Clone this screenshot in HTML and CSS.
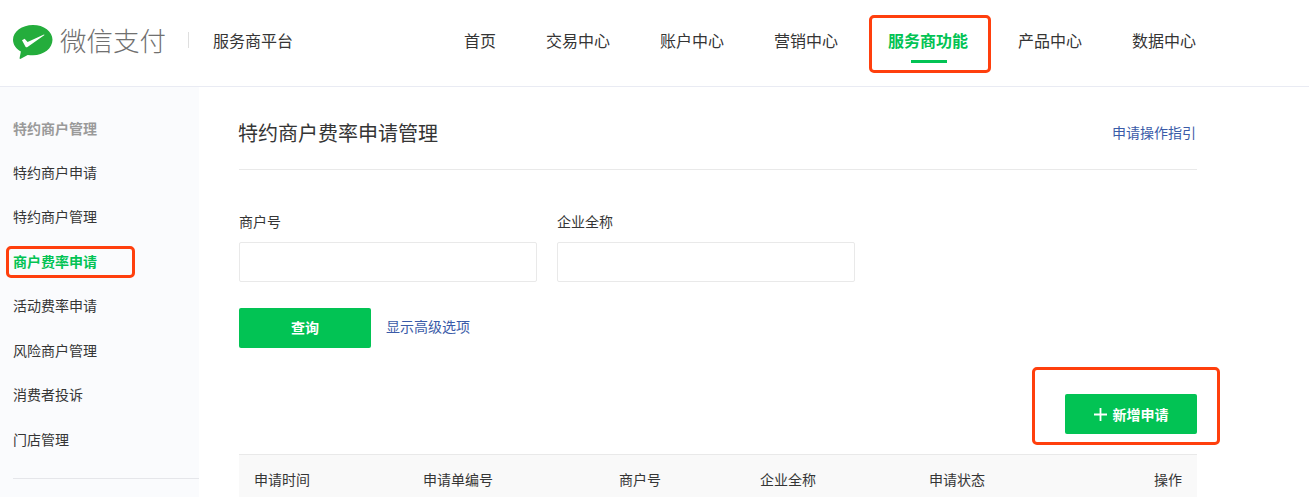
FILE: index.html
```html
<!DOCTYPE html>
<html lang="zh-CN">
<head>
<meta charset="utf-8">
<title>服务商平台</title>
<link rel="stylesheet" href="styles.css">
</head>
<body>
<header class="header">
  <div class="logo">
    <svg class="logo-icon" width="40" height="35" viewBox="0 0 40 35">
      <path fill="#24ad3c" d="M20 0C9 0 0 6.500 0 14.800c0 4.800 3.100 9.100 7.900 11.800L6.500 33.500l0.800 0.500 7.400-4.100c1.700 0.300 3.400 0.400 5.300 0.400 10.800 0 19.500-7 19.500-15.500S30.800 0 20 0z"/>
      <path fill="#fff" d="M9 15.200l2.600-1.500 3 3.200L31 9.400l0.500 0.700L14.500 22c-0.800 0.500-1.500 0.300-2-0.300z"/>
    </svg>
    <span class="logo-text">微信支付</span>
    <span class="logo-sep"></span>
    <span class="logo-sub">服务商平台</span>
  </div>
  <nav class="nav">
    <a class="nav-item">首页</a>
    <a class="nav-item">交易中心</a>
    <a class="nav-item">账户中心</a>
    <a class="nav-item">营销中心</a>
    <a class="nav-item active">服务商功能</a>
    <a class="nav-item">产品中心</a>
    <a class="nav-item">数据中心</a>
  </nav>
</header>
<div class="body-row">
  <aside class="sidebar">
    <div class="side-title">特约商户管理</div>
    <a class="side-item">特约商户申请</a>
    <a class="side-item">特约商户管理</a>
    <a class="side-item current">商户费率申请</a>
    <a class="side-item">活动费率申请</a>
    <a class="side-item">风险商户管理</a>
    <a class="side-item">消费者投诉</a>
    <a class="side-item">门店管理</a>
    <div class="side-divider"></div>
  </aside>
  <main class="main">
    <div class="page-head">
      <h1 class="page-title">特约商户费率申请管理</h1>
      <a class="link guide">申请操作指引</a>
    </div>
    <form class="filters">
      <label class="field">
        <span class="field-label">商户号</span>
        <input class="field-input" type="text">
      </label>
      <label class="field">
        <span class="field-label">企业全称</span>
        <input class="field-input" type="text">
      </label>
    </form>
    <div class="query-row">
      <button class="btn btn-query" type="button">查询</button>
      <a class="link">显示高级选项</a>
    </div>
    <div class="action-row">
      <button class="btn btn-add" type="button">
        <svg class="plus" width="13" height="13" viewBox="0 0 13 13"><path fill="#fff" d="M5.600 0h1.800v5.600H13v1.800H7.400V13H5.600V7.400H0V5.600h5.600z"/></svg>
        新增申请
      </button>
    </div>
    <div class="table-head">
      <span>申请时间</span>
      <span>申请单编号</span>
      <span>商户号</span>
      <span>企业全称</span>
      <span>申请状态</span>
      <span class="cell-right">操作</span>
    </div>
  </main>
</div>
<div class="mark mark-nav"></div>
<div class="mark mark-side"></div>
<div class="mark mark-add"></div>
</body>
</html>
```
FILE: styles.css
```css
* { box-sizing: border-box; }
html, body { margin: 0; height: 497px; overflow: hidden; }
body {
  position: relative;
  background: #fff;
  color: #353535;
  font-family: "Noto Sans CJK SC", "Liberation Sans", sans-serif;
  font-size: 14px;
}
.header {
  display: flex;
  align-items: center;
  height: 87px;
  padding: 0 113px 6px 13px;
  border-bottom: 1px solid #e9ebf3;
}
.logo { display: flex; align-items: center; }
.logo-icon { display: block; margin-top: 4px; }
.logo-text {
  margin-left: 7px;
  width: 104px;
  font-size: 26.5px;
  font-weight: 300;
  line-height: 34px;
  color: #707070;
  white-space: nowrap;
}
.logo-sep { width: 1px; height: 16px; margin: 0 24px; background: #dfdfdf; }
.logo-sub { font-size: 16px; color: #353535; }
.nav { display: flex; gap: 50px; margin-left: auto; }
.nav-item {
  position: relative;
  font-size: 16px;
  line-height: 24px;
  color: #353535;
  white-space: nowrap;
}
.nav-item.active { color: #02c354; font-weight: 700; }
.nav-item.active::after {
  content: "";
  position: absolute;
  left: 23px;
  right: 21px;
  top: 32px;
  height: 3px;
  background: #02c354;
}
.body-row { display: flex; height: 410px; }
.sidebar {
  flex: none;
  width: 199px;
  padding: 18px 0 0 13px;
  background: #fafbfd;
}
.side-title, .side-item {
  display: block;
  height: 44.5px;
  line-height: 44.500px;
  font-size: 14px;
  color: #353535;
}
.side-title { color: #9a9a9a; font-weight: 700; line-height: 46.500px; }
.side-item.current { color: #02c354; font-weight: 700; }
.side-divider { height: 1px; margin-top: 17px; background: #e5e6ea; }
.main { flex: none; width: 958px; margin-left: 40px; }
.page-head {
  display: flex;
  justify-content: space-between;
  align-items: center;
  height: 83px;
  padding-top: 8px;
  border-bottom: 1px solid #e9e9e9;
}
.page-title { margin: 0 0 0 -1px; font-size: 20px; font-weight: 400; color: #353535; }
.link { font-size: 14px; color: #3a5ba8; white-space: nowrap; }
.guide { margin-right: 1px; }
.filters { display: flex; gap: 20px; margin-top: 39px; }
.field { display: flex; flex-direction: column; width: 298px; }
.field-label { height: 24px; line-height: 24px; font-size: 14px; color: #353535; }
.field-input {
  height: 40px;
  margin-top: 9px;
  border: 1px solid #e9e9e9;
  border-radius: 2px;
  background: #fff;
}
.query-row { display: flex; align-items: center; gap: 15px; margin-top: 26px; }
.query-row .link { margin-top: -4px; }
.btn {
  display: flex;
  align-items: center;
  justify-content: center;
  width: 132px;
  height: 40px;
  padding: 0;
  border: 0;
  border-radius: 2px;
  background: #02c354;
  color: #fff;
  font-family: inherit;
  font-size: 14px;
  font-weight: 700;
}
.btn-query { padding-bottom: 2px; }
.action-row { display: flex; justify-content: flex-end; margin-top: 46px; }
.btn-add { gap: 6px; }
.plus { display: block; }
.table-head {
  display: grid;
  grid-template-columns: 169px 196px 141px 169px 1fr auto;
  align-items: center;
  height: 43px;
  margin-top: 20px;
  padding: 6px 15px 0;
  background: #f9f9f9;
  border-top: 1px solid #e9e9e9;
  font-size: 14px;
  color: #353535;
}
.cell-right { text-align: right; }
.mark {
  position: absolute;
  border: 3px solid #ff3f0d;
  border-radius: 5px;
  pointer-events: none;
}
.mark-nav { left: 869px; top: 15px; width: 122px; height: 58px; }
.mark-side { left: 6px; top: 246px; width: 129px; height: 32px; }
.mark-add { left: 1032px; top: 367px; width: 188px; height: 78px; }
```
